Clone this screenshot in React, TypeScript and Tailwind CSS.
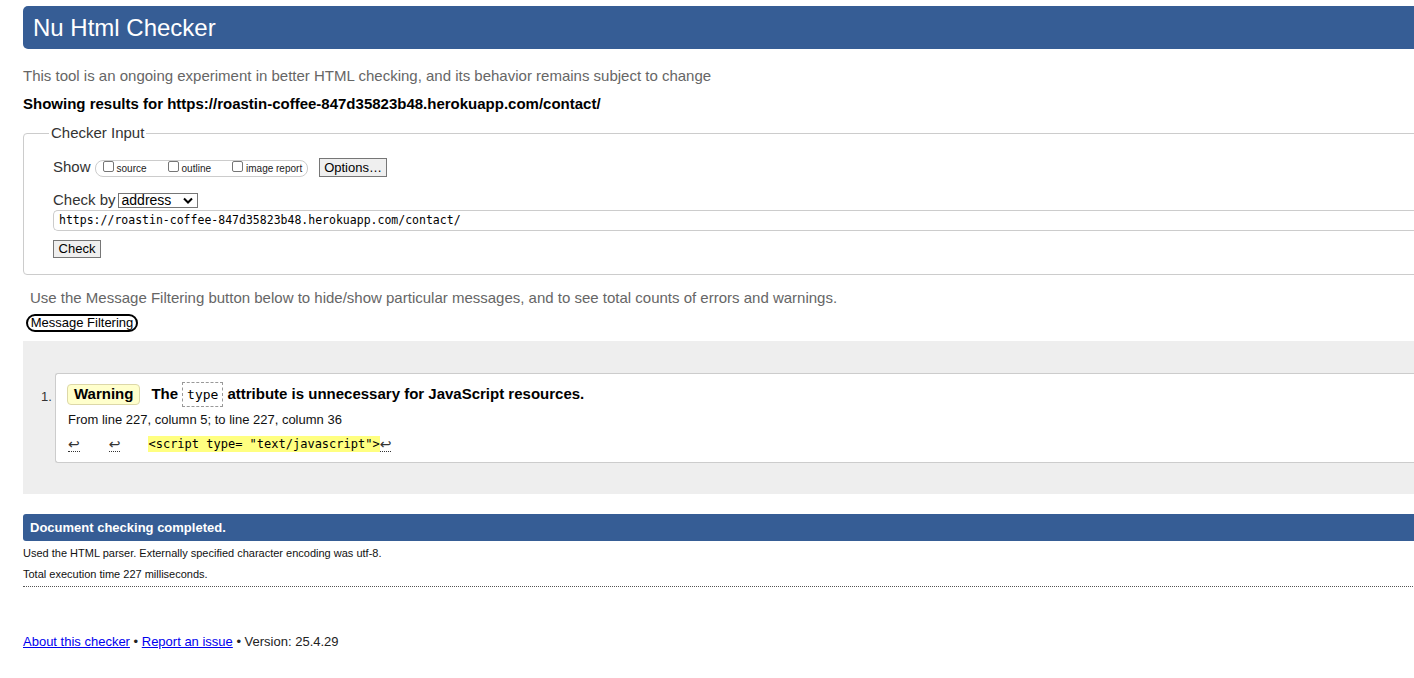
import React from 'react';

const sans = { fontFamily: '"Liberation Sans", Arial, sans-serif' };
const mono = '[font-family:"DejaVu_Sans_Mono","Liberation_Mono",monospace]';

const Box: React.FC<{ label: string }> = ({ label }) => (
  <span className="flex items-center mr-[21px] last:mr-0">
    <span className="w-[11px] h-[11px] border border-[#767676] rounded-[2px] bg-white mr-[3px] -mt-[3px]" />
    <span className="text-[10px] text-[#222]">{label}</span>
  </span>
);

const Nl: React.FC = () => (
  <span className="inline-block border-b border-dotted border-[#333] leading-[14px] text-[14px] text-[#333] [font-family:'DejaVu_Sans',sans-serif]">↩</span>
);

const App: React.FC = () => {
  return (
    <div className="w-full h-[678px] overflow-hidden bg-white text-black" style={sans}>
      <div className="ml-[23px] w-[1420px]">
        {/* Header */}
        <div className="mt-[6px] h-[43px] bg-[#365d95] rounded-l-[5px] flex items-center pl-[10px]">
          <h1 className="text-[24px] text-white leading-none">Nu Html Checker</h1>
        </div>

        <p className="mt-[18px] text-[15px] leading-[18px] text-[#666]">
          This tool is an ongoing experiment in better HTML checking, and its behavior remains subject to change
        </p>
        <p className="mt-[10px] text-[15px] leading-[18px] font-bold">
          Showing results for https://roastin-coffee-847d35823b48.herokuapp.com/contact/
        </p>

        {/* Checker input */}
        <fieldset className="mt-[11px] border border-[#ccc] rounded-[4px] pl-[29px] pt-[16px] pb-[16px]">
          <legend className="-ml-[4px] px-[2px] text-[15px] leading-[18px] text-[#333]">Checker Input</legend>

          <div className="flex items-center h-[19px]">
            <span className="text-[15px] text-[#333] mr-[4px]">Show</span>
            <span className="flex items-center h-[17px] border border-[#ccc] rounded-[8px] pl-[7px] pr-[5px] mt-[1px]">
              <Box label="source" />
              <Box label="outline" />
              <Box label="image report" />
            </span>
            <span className="ml-[11px] h-[19px] px-[4px] flex items-center bg-[#efefef] border border-[#767676] text-[13px] leading-none">
              Options…
            </span>
          </div>

          <div className="mt-[14px] flex items-center h-[18px]">
            <span className="text-[15px] text-[#333] mr-[2px]">Check by</span>
            <span className="w-[80px] h-[15px] border border-[#767676] flex items-center justify-between pl-[3px] pr-[4px] bg-white">
              <span className="text-[14px] leading-none">address</span>
              <svg width="10" height="7" viewBox="0 0 10 7">
                <path d="M1 1.5 L5 5.5 L9 1.5" fill="none" stroke="#000" strokeWidth="2" />
              </svg>
            </span>
          </div>

          <div className={`mt-[1px] h-[21px] border border-[#ccc] rounded-l-[5px] border-r-0 flex items-center pl-[5px] text-[11.5px] ${mono}`}>
            https://roastin-coffee-847d35823b48.herokuapp.com/contact/
          </div>

          <div className="mt-[9px] w-[48px] h-[18px] bg-[#efefef] border border-[#767676] flex items-center justify-center text-[13px]">
            Check
          </div>
        </fieldset>

        <p className="mt-[14px] pl-[7px] text-[15px] leading-[18px] text-[#666]">
          Use the Message Filtering button below to hide/show particular messages, and to see total counts of errors and warnings.
        </p>
        <div className="mt-[7px] ml-[3px] w-[112px] h-[18px] border-2 border-black rounded-full flex items-center justify-center text-[13px]">
          Message Filtering
        </div>

        {/* Results */}
        <div className="mt-[9px] bg-[#eeeeee] pt-[32px] pb-[31px] pl-[18px]">
          <div className="flex">
            <span className="w-[14px] text-[13px] mt-[14px] text-[#333]">1.</span>
            <div className="flex-1 h-[90px] bg-white border border-[#ccc] border-r-0 rounded-l-[3px] pl-[11px] pt-[8px]">
              <div className="flex items-center h-[25px]">
                <span className="h-[21px] px-[6px] flex items-center bg-[#ffffcc] border border-[#ddd8a8] rounded-[4px] text-[15px] font-bold">
                  Warning
                </span>
                <span className="ml-[11px] text-[15px] font-bold">The</span>
                <span className={`ml-[4px] h-[25px] px-[4px] flex items-center border border-dashed border-[#999] text-[13px] ${mono}`}>type</span>
                <span className="ml-[4px] text-[15px] font-bold">attribute is unnecessary for JavaScript resources.</span>
              </div>
              <p className="mt-[5px] pl-[1px] text-[13px] leading-[16px] text-[#111]">
                From line 227, column 5; to line 227, column 36
              </p>
              <div className="mt-[8px] pl-[1px] flex items-center h-[16px]">
                <Nl />
                <span className="ml-[29px]"><Nl /></span>
                <span className={`ml-[28px] bg-[#ffff80] text-[12px] leading-[16px] ${mono}`}>
                  {'<script type= "text/javascript">'}
                </span>
                <Nl />
              </div>
            </div>
          </div>
        </div>

        {/* Summary */}
        <div className="mt-[20px] h-[27px] bg-[#365d95] rounded-l-[3px] flex items-center pl-[7px]">
          <span className="text-[13px] font-bold text-white">Document checking completed.</span>
        </div>
        <div className="border-b border-dotted border-[#555] pb-[5px]">
          <p className="mt-[5px] text-[11px] leading-[14px] text-[#111]">
            Used the HTML parser. Externally specified character encoding was utf-8.
          </p>
          <p className="mt-[7px] text-[11px] leading-[14px] text-[#111]">Total execution time 227 milliseconds.</p>
        </div>

        <p className="mt-[47px] text-[13px] leading-[16px] text-[#222]">
          <a className="text-[#0000ee] underline" href="#">About this checker</a> •{' '}
          <a className="text-[#0000ee] underline" href="#">Report an issue</a> • Version: 25.4.29
        </p>
      </div>
    </div>
  );
};

export default App;
